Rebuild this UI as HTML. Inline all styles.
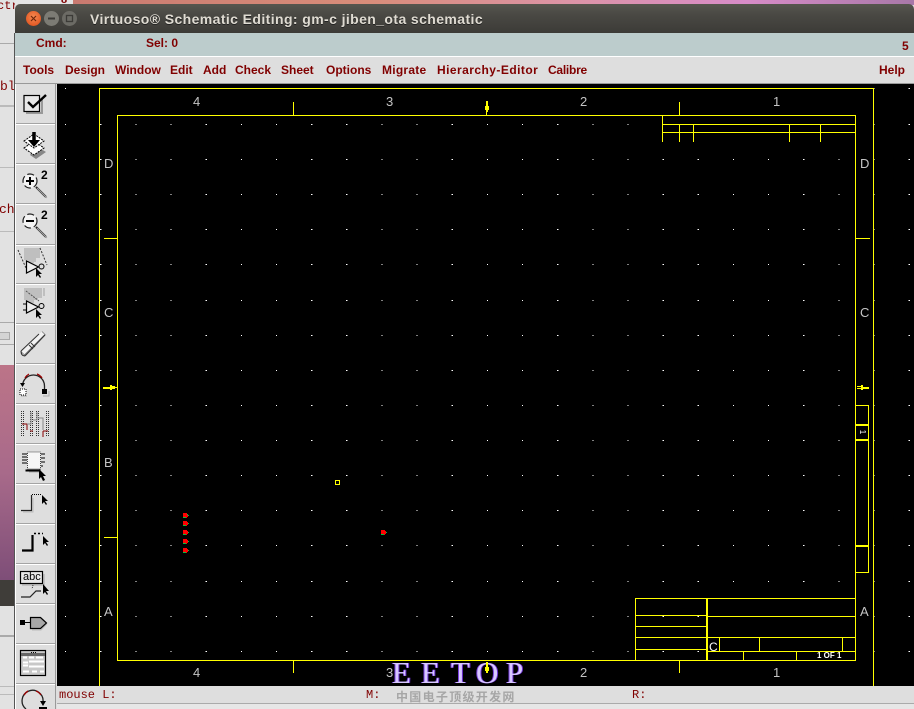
<!DOCTYPE html>
<html><head><meta charset="utf-8"><style>
html,body{margin:0;padding:0}
body{width:914px;height:709px;overflow:hidden;position:relative;background:#dedede;font-family:"Liberation Sans","Noto Sans CJK SC",sans-serif}
div,span.a{position:absolute}
.m{position:absolute;top:62px;font:bold 12px/16px "Liberation Sans",sans-serif;color:#800000;white-space:nowrap}
.l{position:absolute;font:13px/14px "Liberation Sans",sans-serif;color:#c4c4c4;white-space:nowrap}
.s{position:absolute;top:688px;font:12px/14px "Liberation Mono",monospace;color:#800000;white-space:nowrap}
.e{position:absolute;top:655px;font:31px/36px "Liberation Serif",serif;color:#d8c8ff;text-shadow:1px 0 #6a2fd0,-1px 0 #7a40e0;white-space:nowrap}
</style></head><body>
<!-- desktop behind -->
<div style="left:73px;top:0;width:841px;height:5px;background:linear-gradient(90deg,#c97a70,#d98d7a 35%,#dc94a8 60%,#d88cc8 80%,#a878a8)"></div>
<div style="left:0;top:0;width:73px;height:5px;background:#e4e4e4"></div>
<div style="left:0;top:0;width:15px;height:365px;background:#e2e2e2"></div>
<div style="left:0;top:43px;width:15px;height:1px;background:#aaa"></div>
<div style="left:0;top:105px;width:15px;height:2px;background:#bbb"></div>
<div style="left:0;top:167px;width:15px;height:1px;background:#bbb"></div>
<div style="left:0;top:231px;width:15px;height:1px;background:#bbb"></div>
<div style="left:0;top:322px;width:15px;height:1px;background:#aaa"></div>
<div style="left:0;top:332px;width:9px;height:6px;background:#d4d4d4;border:1px solid #aaa;border-left:0"></div>
<div style="left:0;top:344px;width:15px;height:1px;background:#aaa"></div>
<div style="left:0;top:365px;width:15px;height:215px;background:linear-gradient(180deg,#bc7488,#a86a8a 50%,#7e4e78)"></div>
<div style="left:0;top:580px;width:15px;height:26px;background:#3f3d39"></div>
<div style="left:0;top:606px;width:15px;height:103px;background:#e2e2e2"></div>
<div style="left:0;top:635px;width:15px;height:2px;background:#aaa"></div>
<div style="left:0;top:686px;width:15px;height:1px;background:#bbb"></div>
<div style="left:0;top:694px;width:15px;height:1px;background:#bbb"></div>
<div style="left:-3px;top:-1px;font:12px/14px 'Liberation Mono',monospace;color:#800000;white-space:nowrap;width:18px;overflow:hidden">ctr</div>
<div style="left:61px;top:-6px;font:bold 11px/12px 'Liberation Sans',sans-serif;color:#800000">8</div>
<div style="left:0;top:80px;font:13px/14px 'Liberation Mono',monospace;color:#800000;width:15px;overflow:hidden">bl</div>
<div style="left:-1px;top:203px;font:13px/14px 'Liberation Mono',monospace;color:#800000;width:16px;overflow:hidden">ch</div>
<!-- window -->
<div style="left:15px;top:4px;width:899px;height:29px;border-radius:5px 5px 0 0;background:linear-gradient(180deg,#57564f,#4a4944 35%,#3c3b37)"></div>
<div style="left:15px;top:33px;width:899px;height:23px;background:#bccccc"></div>
<div style="left:15px;top:56px;width:899px;height:1px;background:#fff"></div>
<div style="left:15px;top:57px;width:899px;height:26px;background:#dedede"></div>
<div style="left:15px;top:83px;width:899px;height:1px;background:#999"></div>
<div style="left:14px;top:33px;width:1px;height:676px;background:#555"></div>
<div style="left:15px;top:84px;width:41px;height:625px;background:#dedede;border-left:1px solid #fff;box-sizing:border-box"></div>
<!-- title -->
<div style="left:26px;top:11px;width:15px;height:15px;border-radius:50%;background:radial-gradient(circle at 50% 40%,#f58a52,#dd4814)"></div>
<div style="left:44px;top:11px;width:15px;height:15px;border-radius:50%;background:#7c7b74"></div>
<div style="left:62px;top:11px;width:15px;height:15px;border-radius:50%;background:#6c6b65"></div>
<svg style="position:absolute;left:0;top:0" width="90" height="33"><path d="M31 16l5 5M36 16l-5 5" stroke="#70280c" stroke-width="1.2"/><path d="M48 18.500h7" stroke="#3c3b37" stroke-width="2"/><rect x="66.500" y="15.500" width="6" height="6" fill="none" stroke="#3c3b37" stroke-width="1.300"/></svg>
<div style="left:90px;top:10px;font:bold 14px/18px 'Liberation Sans',sans-serif;letter-spacing:.4px;color:#dfdbd2;white-space:nowrap;text-shadow:0 1px #222">Virtuoso® Schematic Editing: gm-c jiben_ota schematic</div>
<!-- status row -->
<div class="m" style="left:36px;top:35px">Cmd:</div>
<div class="m" style="left:146px;top:35px">Sel: 0</div>
<div class="m" style="left:902px;top:38px">5</div>
<div class="m" style="left:23px">Tools</div>
<div class="m" style="left:65px">Design</div>
<div class="m" style="left:115px">Window</div>
<div class="m" style="left:170px">Edit</div>
<div class="m" style="left:203px">Add</div>
<div class="m" style="left:235px">Check</div>
<div class="m" style="left:281px">Sheet</div>
<div class="m" style="left:326px">Options</div>
<div class="m" style="left:382px;letter-spacing:.25px">Migrate</div>
<div class="m" style="left:437px;letter-spacing:.45px">Hierarchy-Editor</div>
<div class="m" style="left:548px;letter-spacing:-.25px">Calibre</div>
<div class="m" style="left:879px">Help</div>
<!-- canvas -->
<div style="left:57px;top:84px;width:857px;height:602px;background:#000"></div>
<svg style="position:absolute;left:0;top:0" width="914" height="709" shape-rendering="crispEdges">
<g stroke="#fff" stroke-width="1" stroke-dasharray="1.200 33.950" fill="none">
<path d="M65 88.500H914"/><path d="M65 124.500H914"/><path d="M65 159.500H914"/><path d="M65 194.500H914"/><path d="M65 229.500H914"/><path d="M65 264.500H914"/><path d="M65 300.500H914"/><path d="M65 335.500H914"/><path d="M65 370.500H914"/><path d="M65 405.500H914"/><path d="M65 440.500H914"/><path d="M65 475.500H914"/><path d="M65 510.500H914"/><path d="M65 545.500H914"/><path d="M65 581.500H914"/><path d="M65 616.500H914"/><path d="M65 651.500H914"/>
</g>
<g stroke="#ffff00" stroke-width="1" fill="none">
<path d="M99.500 686V88.500H873.500V686"/>
<rect x="117.500" y="115.500" width="738" height="545"/>
<path d="M293.500 102V115M679.500 102V115M293.500 661V673M679.500 661V673"/>
<path d="M104 238.500H117M104 537.500H117M856 238.500H870"/>
<path d="M662.500 115V142M662 124.500H855M662 132.500H855M679.500 124V142M693.500 124V142M789.500 124V142M820.500 124V142"/>
<path d="M635.500 598.500H855M635.500 598V660M635 615.500H706M635 626.500H706M635 637.500H706M635 649.500H706"/>
<path d="M706.500 598V660M707.500 598V660"/>
<path d="M707 616.500H855M707 637.500H855M707 651.500H855M719.500 637V651M759.500 637V651M842.500 637V651M743.500 651V660M796.500 651V660"/>
<path d="M855.500 405.500H868.500V572.500H855.500M856 424.500H868M856 425.500H868M856 439.500H868M856 440.500H868M856 545.500H868M856 546.500H868"/>
<rect x="335.500" y="480.500" width="4" height="4"/>
</g>
<g fill="#ffff00">
<rect x="103" y="387" width="7" height="2"/><rect x="110" y="385" width="2" height="5"/><rect x="112" y="386" width="3" height="3"/><rect x="115" y="387" width="3" height="1"/>
<rect x="857" y="386" width="4" height="1"/><rect x="857" y="388" width="4" height="1"/><rect x="861" y="385" width="2" height="5"/><rect x="863" y="387" width="6" height="2"/>
<rect x="486" y="101" width="2" height="11"/><rect x="485" y="106" width="4" height="4"/><rect x="486" y="112" width="1" height="3"/>
<rect x="486" y="662" width="2" height="11"/><rect x="485" y="667" width="4" height="4"/>
</g>
<g id="pins">
<path d="M183 513h4v1h1v1h1v1h-1v1h-1v1h-4z" fill="#ff0000"/><path d="M183 517h3v1h-3zM187 514h1v1h-1zM188 515h1v1h-1z" fill="#00c040"/>
<path d="M183 521h4v1h1v1h1v1h-1v1h-1v1h-4z" fill="#ff0000"/><path d="M183 525h3v1h-3zM188 523h1v1h-1z" fill="#00c040"/>
<path d="M183 530h4v1h1v1h1v1h-1v1h-1v1h-4z" fill="#ff0000"/><path d="M183 534h3v1h-3zM188 532h1v1h-1z" fill="#00c040"/>
<path d="M183 539h4v1h1v1h1v1h-1v1h-1v1h-4z" fill="#ff0000"/><path d="M183 543h3v1h-3zM188 541h1v1h-1z" fill="#00c040"/>
<path d="M183 548h4v1h1v1h1v1h-1v1h-1v1h-4z" fill="#ff0000"/><path d="M183 552h3v1h-3zM188 550h1v1h-1z" fill="#00c040"/>
<path d="M381 530h4v1h1v1h1v1h-1v1h-1v1h-4z" fill="#ff0000"/><path d="M381 534h3v1h-3zM386 532h1v1h-1z" fill="#00c040"/>
</g>
</svg>
<span class="l" style="left:193px;top:95px">4</span><span class="l" style="left:386px;top:95px">3</span><span class="l" style="left:580px;top:95px">2</span><span class="l" style="left:773px;top:95px">1</span>
<span class="l" style="left:193px;top:666px">4</span><span class="l" style="left:386px;top:666px">3</span><span class="l" style="left:580px;top:666px">2</span><span class="l" style="left:773px;top:666px">1</span>
<span class="l" style="left:104px;top:157px">D</span><span class="l" style="left:104px;top:306px">C</span><span class="l" style="left:104px;top:456px">B</span><span class="l" style="left:104px;top:605px">A</span>
<span class="l" style="left:860px;top:157px">D</span><span class="l" style="left:860px;top:306px">C</span><span class="l" style="left:860px;top:605px">A</span>
<span class="l" style="left:709px;top:640px;color:#fff;font-size:12px">C</span>
<span class="l" style="left:817px;top:651px;color:#fff;font:bold 8px/10px 'Liberation Sans',sans-serif">1 OF 1</span>
<span class="l" style="left:860px;top:427px;color:#fff;font:8px/10px 'Liberation Sans',sans-serif;transform:rotate(90deg)">1</span>
<!-- status -->
<div style="left:57px;top:686px;width:857px;height:17px;background:#dedede"></div>
<div style="left:57px;top:703px;width:857px;height:1px;background:#aaa"></div>
<div style="left:57px;top:704px;width:857px;height:5px;background:#e6e6e6"></div>
<div class="s" style="left:59px">mouse L:</div>
<div class="s" style="left:366px">M:</div>
<div class="s" style="left:632px">R:</div>
<div class="e" style="left:392px">E</div>
<div class="e" style="left:421px">E</div>
<div class="e" style="left:451px">T</div>
<div class="e" style="left:476px">O</div>
<div class="e" style="left:506px">P</div>
<svg style="position:absolute;left:484px;top:660px" width="6" height="14" shape-rendering="crispEdges"><rect x="2" y="2" width="2" height="11" fill="#ff0"/><rect x="1" y="7" width="4" height="4" fill="#ff0"/></svg>
<div style="left:396px;top:690px;font:bold 12px/14px 'Noto Sans CJK SC',sans-serif;letter-spacing:1.300px;color:#a6a6a6;white-space:nowrap">中国电子顶级开发网</div>
<!-- toolbar buttons -->
<svg style="position:absolute;left:0;top:84px" width="57" height="625" shape-rendering="crispEdges">
<path d="M16 39.500H55M16 79.500H55M16 119.500H55M16 160.500H55M16 199.500H55M16 239.500H55M16 279.500H55M16 319.500H55M16 359.500H55M16 399.500H55M16 439.500H55M16 479.500H55M16 519.500H55M16 559.500H55M16 599.500H55" stroke="#a4a4a4"/>
<path d="M16 40.500H55M16 80.500H55M16 120.500H55M16 161.500H55M16 200.500H55M16 240.500H55M16 280.500H55M16 320.500H55M16 360.500H55M16 400.500H55M16 440.500H55M16 480.500H55M16 520.500H55M16 560.500H55M16 600.500H55" stroke="#fff"/>
<path d="M55.500 0V625" stroke="#9a9a9a"/>
</svg>
<svg style="position:absolute;left:0;top:0" width="57" height="709" fill="none">
<!-- 1 check -->
<path d="M26 113h16V99" stroke="#999" stroke-width="2"/>
<rect x="24" y="95.500" width="15.500" height="16" fill="#e8e8e8" stroke="#000" stroke-width="1.200"/>
<path d="M28 102l5 5 13-12" stroke="#000" stroke-width="2.400"/>
<!-- 2 stack -->
<path d="M36 146l10 6-10 7-6-4z" fill="#888"/>
<path d="M24 148l10-7 10 7-10 7z" fill="#fff" stroke="#000" stroke-dasharray="2 1"/>
<path d="M24 141l10-7 10 7-10 7z" fill="#fff" stroke="#000" stroke-dasharray="2 1"/>
<path d="M34 132v12" stroke="#000" stroke-width="3.500"/><path d="M28 140l6 7 6-7z" fill="#000"/>
<!-- 3 zoom in -->
<circle cx="30" cy="181" r="7" fill="#f4f4f4" stroke="#222" stroke-dasharray="7 3" stroke-width="1.200"/>
<path d="M36 187l10 10" stroke="#222" stroke-width="2"/><path d="M37 188l10 10" stroke="#aaa"/>
<path d="M26 181h8M30 177v8" stroke="#000" stroke-width="2"/>
<!-- 4 zoom out -->
<circle cx="30" cy="221" r="7" fill="#f4f4f4" stroke="#222" stroke-dasharray="7 3" stroke-width="1.200"/>
<path d="M36 227l10 10" stroke="#222" stroke-width="2"/><path d="M37 228l10 10" stroke="#aaa"/>
<path d="M26 221h8" stroke="#000" stroke-width="2"/>
<!-- 5 -->
<path d="M25 248v12M27 248v12M29 248v14M31 248v15M33 248v15M35 248v14M37 248v10M39 248v10" stroke="#a0a0a0"/>
<path d="M18 250l8 18M40 248l7 17" stroke="#333" stroke-dasharray="2 1.500"/>
<path d="M26.500 261v12l12-6z" fill="#eee" stroke="#000" stroke-width="1.200"/><circle cx="41.500" cy="266.500" r="2.500" stroke="#000"/>
<path d="M36 268v9l2-2 2 3 1-1-2-3h3z" fill="#000"/>
<!-- 6 -->
<path d="M25 288v12M27 288v14M29 288v14M31 288v15M33 288v15M35 288v12M37 288v12M39 288v10M41 288v10M44 288v8" stroke="#a0a0a0"/>
<path d="M26 291l13 10" stroke="#555" stroke-dasharray="2 1"/>
<path d="M26.500 301v12l12-6z" fill="#eee" stroke="#000" stroke-width="1.200"/><circle cx="41.500" cy="306" r="2.500" stroke="#000"/><path d="M23 304h3M23 310h3" stroke="#000"/>
<path d="M36 309v9l2-2 2 3 1-1-2-3h3z" fill="#000"/>
<!-- 7 -->
<path d="M23 354l21-21" stroke="#777" stroke-width="5"/>
<path d="M23 353l20-20" stroke="#f2f2f2" stroke-width="4"/>
<path d="M21 351l18-17M25 356l20-21" stroke="#333"/>
<path d="M31 343l4 4M29 345l4 4" stroke="#333"/><path d="M21 351q0 5 4 5" stroke="#222"/>
<!-- 8 -->
<path d="M22.500 386a11 11 0 0 1 22 0v5" stroke="#222" stroke-width="1.300"/>
<path d="M25 378a11 11 0 0 1 4-4M37 374a11 11 0 0 1 5 4" stroke="#900" stroke-width="1.300"/>
<path d="M20 383h5l-2.500 4z" fill="#000"/>
<rect x="20" y="389" width="6" height="6" fill="#fff" stroke="#000" stroke-dasharray="1 1"/>
<rect x="42" y="389" width="5" height="5" fill="#000"/>
<path d="M27 396h-6M49 391v5h-6" stroke="#aaa"/>
<!-- 9 -->
<path d="M21.500 411v26M23.500 411v26M30.500 411v26M32.500 411v26M36.500 411v26M38.500 411v26M46.500 411v26M48.500 411v26" stroke="#333" stroke-dasharray="1 1"/>
<path d="M22 424h5v6M30 431h3M43 431h5M43 431v6" stroke="#800" stroke-width="1"/>
<path d="M27 424h4v-12M33 420h4v-8M38 418h5v12" stroke="#888"/>
<!-- 10 -->
<rect x="27.500" y="452" width="13" height="17" fill="#f6f6f6" stroke="#444" stroke-dasharray="1 1"/>
<path d="M22 454h5M22 457h5M22 460h5M22 463h5M41 454h4M41 458h4M41 462h4M41 466h2" stroke="#000"/>
<path d="M26 470h14v1H26z" stroke="#000"/><path d="M29 472h11" stroke="#aaa"/>
<path d="M39 469v10l2-2 2 4 2-1-2-4h3z" fill="#000"/>
<!-- 11 -->
<path d="M21 510.500h10.500V495" stroke="#222" stroke-width="1.200"/><path d="M32 494.500h10" stroke="#000" stroke-dasharray="1 1"/>
<path d="M42 495v9l2-2 2 3 1-1-2-3h3z" fill="#000"/>
<path d="M23 512h10V498" stroke="#bbb"/>
<!-- 12 -->
<path d="M22 550.500h10.500V535" stroke="#000" stroke-width="2.200"/><path d="M34 533.500h9" stroke="#000" stroke-width="1.500" stroke-dasharray="2 2"/>
<path d="M43 536v9l2-2 2 3 1-1-2-3h3z" fill="#000"/>
<!-- 13 -->
<path d="M22 585h22V574" stroke="#aaa"/>
<rect x="20.500" y="571.500" width="22" height="12" fill="#e8e8e8" stroke="#000" stroke-width="1.200"/>
<path d="M21 597h9l6-6h5" stroke="#222" stroke-width="1.200"/>
<path d="M33 585l-1 4" stroke="#333" stroke-dasharray="1 1"/>
<path d="M43 584v10l2-2 2 3 1-1-2-3h3z" fill="#000"/>
<!-- 14 -->
<rect x="20" y="620" width="5" height="5" fill="#000"/><path d="M25 622.500h6" stroke="#000"/>
<path d="M30.500 617.500h10l6 5.500-6 5.500h-10z" fill="#a8a8a8" stroke="#000" stroke-width="1.200"/><path d="M32 630h9l6-6" stroke="#bbb"/>
<!-- 15 -->
<rect x="20.500" y="650.500" width="25" height="25" fill="#c8c8c8" stroke="#000" stroke-width="1.200"/>
<path d="M21 654.500h24" stroke="#666" stroke-width="3"/><path d="M31 652.500h1M33 652.500h1M35 652.500h1" stroke="#000"/>
<path d="M23 657.500h4M29 657.500h5M36 657.500h7M23 662.500h5M29 661.500h15M23 665.500h5M29 666.500h15M23 671.500h6M32 671.500h5M40 671.500h4" stroke="#fff" stroke-width="2"/>
<!-- 16 -->
<path d="M26 709a10.500 10.500 0 1 1 17-7" stroke="#222" stroke-width="1.300"/>
<path d="M24 695a10.500 10.500 0 0 1 4-4M36 691a10.500 10.500 0 0 1 5 4" stroke="#900" stroke-width="1.300"/>
<path d="M40 701h6l-3 5z" fill="#000"/><path d="M39 708h8" stroke="#000" stroke-width="2"/>
</svg>
<span class="a" style="left:41px;top:167px;font:bold 12px/16px 'Liberation Sans',sans-serif;color:#000">2</span>
<span class="a" style="left:41px;top:207px;font:bold 12px/16px 'Liberation Sans',sans-serif;color:#000">2</span>
<span class="a" style="left:23px;top:570px;font:11px/14px 'Liberation Sans',sans-serif;color:#000">abc</span>
</body></html>
